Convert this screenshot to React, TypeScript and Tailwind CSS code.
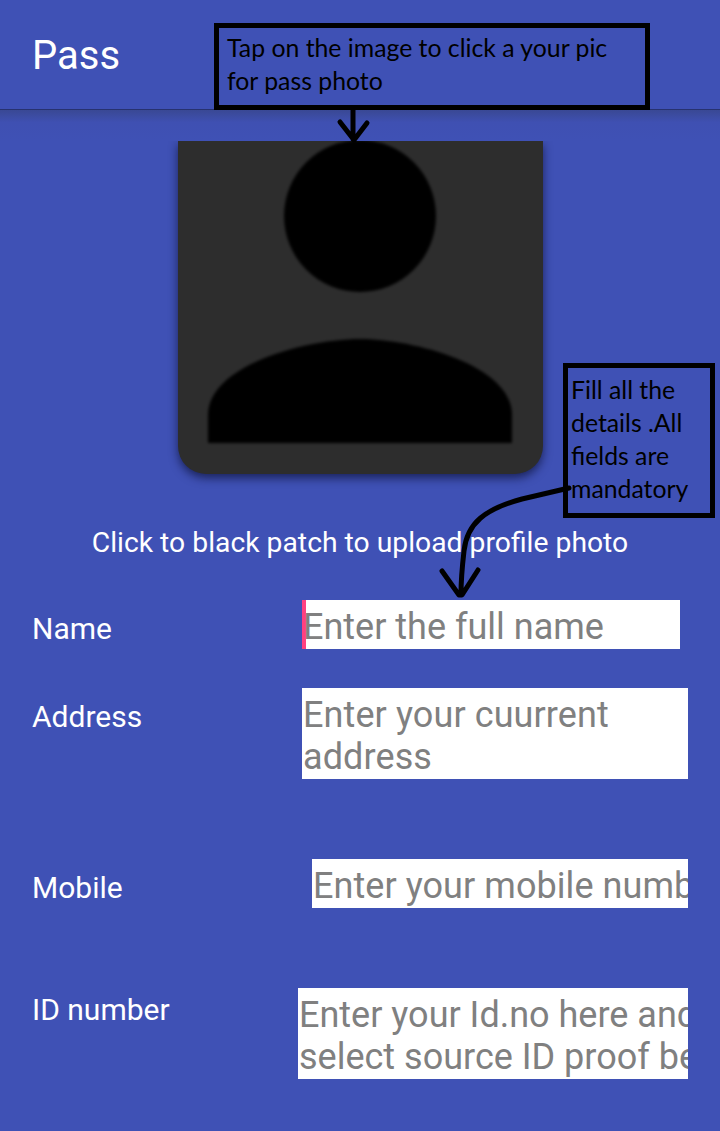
import type { ReactNode } from "react";

interface FieldProps {
  label: string;
  className: string;
  labelClass?: string;
  children: ReactNode;
}

function Field({ label, className, labelClass = "mt-[10px]", children }: FieldProps) {
  return (
    <div className={`flex justify-between items-start pl-8 ${className}`}>
      <label className={`text-[30px] leading-[38px] text-white ${labelClass}`}>{label}</label>
      {children}
    </div>
  );
}

const box = "shrink-0 overflow-hidden whitespace-pre bg-white pt-[6px] pl-px text-[36px] leading-[42px] text-[#808080]";
const note = "absolute whitespace-pre border-[5px] border-black font-['Lato',sans-serif] text-[24.8px] leading-[33px] text-black";

export default function App() {
  return (
    <main className="relative flex h-[1131px] w-[720px] flex-col overflow-hidden bg-[#3f51b5] font-['Roboto',sans-serif]">
      <header className="h-[109px] shrink-0 px-8 pt-8">
        <h1 className="text-[40px] leading-[48px] text-white">Pass</h1>
      </header>
      <div className="h-8 shrink-0 border-t border-[#27326f] bg-linear-to-b from-[#394894] via-[#3f50b2] via-40% to-[#3f51b5]" />

      <div className="h-[366px] shrink-0 overflow-hidden">
        <div className="mx-auto h-[333px] w-[365px] rounded-b-[28px] bg-[#2d2d2d] shadow-[0_4px_10px_rgba(15,20,60,0.75)]">
          <svg width="365" height="333" viewBox="178 141 365 333" className="block overflow-hidden">
            <defs>
              <filter id="soft">
                <feGaussianBlur stdDeviation="1.5" />
              </filter>
            </defs>
            <g filter="url(#soft)">
              <circle cx="360" cy="216" r="76" />
              <path d="M208 443V415C208 365 307 339 360 339S512 365 512 415V443Z" />
            </g>
          </svg>
        </div>
      </div>

      <p className="mt-[18px] h-9 shrink-0 text-center text-[28.3px] leading-9 text-white">
        Click to black patch to upload profile photo
      </p>

      <section className="mt-[39px] flex flex-col">
        <Field label="Name" className="h-[88px] pr-10">
          <div className={`h-[49px] w-[378px] shadow-[inset_4px_0_0_#ff4081] ${box}`}>Enter the full name</div>
        </Field>
        <Field label="Address" className="h-[171px] pr-8">
          <div className={`h-[91px] w-[386px] tracking-[0.1px] ${box}`}>{"Enter your cuurrent\naddress"}</div>
        </Field>
        <Field label="Mobile" className="h-[129px] pr-8">
          <div className={`h-[49px] w-[376px] tracking-[0.06px] ${box}`}>Enter your mobile number</div>
        </Field>
        <Field label="ID number" className="h-[143px] pr-8" labelClass="mt-[3px]">
          <div className={`h-[91px] w-[390px] ${box}`}>{"Enter your Id.no here and\nselect source ID proof below"}</div>
        </Field>
      </section>

      <aside className={`left-[214px] top-[23px] h-[87px] w-[436px] pl-[8px] pt-[3px] ${note}`}>
        {"Tap on the image to click a your pic\nfor pass photo"}
      </aside>
      <aside className={`left-[563px] top-[363px] h-[155px] w-[152px] pl-[3px] pt-[5px] ${note}`}>
        {"Fill all the\ndetails .All\nfields are\nmandatory"}
      </aside>
      <svg width="720" height="1131" className="pointer-events-none absolute left-0 top-0" fill="none" stroke="black" strokeWidth="5" strokeLinecap="round" strokeLinejoin="round">
        <path d="M353 108V139M340 122L354 140L367 123" />
        <path d="M569 488L522 499C485 509 467 523 464 551Q461 577 461 594M442 571L459 595H462L478 570" />
      </svg>
    </main>
  );
}
